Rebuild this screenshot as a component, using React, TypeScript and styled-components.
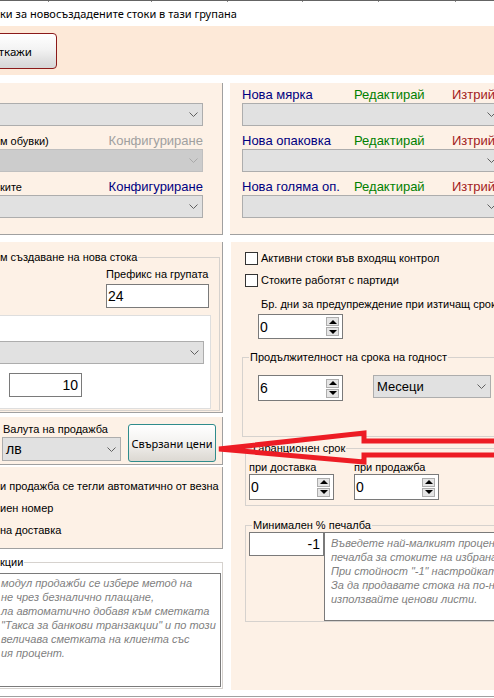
import React from 'react';
import styled, { createGlobalStyle, css } from 'styled-components';

const Global = createGlobalStyle`
  html, body { margin: 0; padding: 0; background: #fff; }
  body { overflow: hidden; }
  * { box-sizing: border-box; }
`;

const PEACH_BAR = '#fde9d8';
const PEACH = '#fdf1e6';
const SANS = `"Liberation Sans", Arial, sans-serif`;
const UI = `"Noto Sans", "Open Sans", sans-serif`;

const Page = styled.div`
  position: relative;
  width: 494px;
  height: 698px;
  overflow: hidden;
  background: #fff;
  font-family: ${SANS};
  font-size: 11px;
  color: #000;
`;

const HeaderRule = styled.div`
  display: grid;
  grid-template-columns: 49px 103px 76px 75px 76px 77px 1fr;
  border-top: 1px solid #646464;
  height: 2px;
`;
const HeaderTick = styled.div`
  border-right: 1px solid #8a8a8a;
`;

const TitleRow = styled.div`
  height: 24px;
  line-height: 24px;
  font-family: ${UI};
  font-size: 11px;
  white-space: nowrap;
`;

const ButtonBar = styled.div`
  height: 49px;
  background: ${PEACH_BAR};
  padding-top: 7px;
`;

const CancelButton = styled.div`
  width: 92px;
  height: 36px;
  margin-left: -35px;
  border: 1px solid #8b1a1a;
  border-radius: 4px;
  background: linear-gradient(#ffffff, #f3f3f3 45%, #e2e2e2 75%, #d6d6d6);
  font-family: ${UI};
  font-size: 11.5px;
  display: flex;
  align-items: center;
  justify-content: center;
`;

const Grid = styled.div<{ $top: number; $height: number; $gap: number }>`
  display: grid;
  grid-template-columns: 223px 1fr;
  column-gap: ${(p) => p.$gap}px;
  margin-top: ${(p) => p.$top}px;
  height: ${(p) => p.$height}px;
`;

const Panel = styled.div<{ $bordered?: boolean; $bleed?: boolean }>`
  background: ${PEACH};
  ${(p) =>
    p.$bordered &&
    css`
      border-right: 1px solid #a0a0a0;
      border-bottom: 1px solid #a0a0a0;
    `}
  ${(p) => p.$bleed && css`margin-right: -12px;`}
`;

const FieldStack = styled.div<{ $left: number; $width: number }>`
  display: flex;
  flex-direction: column;
  gap: 7px;
  padding-top: 4px;
  margin-left: ${(p) => p.$left}px;
  width: ${(p) => p.$width}px;
`;

const Field = styled.div`
  display: flex;
  flex-direction: column;
`;

const LinkRow = styled.div<{ $grid?: boolean }>`
  height: 16px;
  line-height: 16px;
  white-space: nowrap;
  display: ${(p) => (p.$grid ? 'grid' : 'flex')};
  align-items: baseline;
  ${(p) =>
    p.$grid
      ? css`grid-template-columns: 112px 98px auto;`
      : css`justify-content: space-between; padding-left: 4px;`}
`;

const Link = styled.span<{ $tone: 'navy' | 'green' | 'red' | 'gray' }>`
  font-size: 13px;
  color: ${(p) =>
    ({ navy: '#000080', green: '#008000', red: '#a31c1c', gray: '#a0a0a0' })[p.$tone]};
`;

const ComboBox = styled.div<{ $disabled?: boolean; $w?: number; $h?: number; $fs?: number }>`
  height: ${(p) => p.$h ?? 23}px;
  width: ${(p) => (p.$w ? `${p.$w}px` : 'auto')};
  flex: none;
  border: 1px solid ${(p) => (p.$disabled ? '#bfbfbf' : '#adadad')};
  background: ${(p) => (p.$disabled ? '#cccccc' : '#e1e1e1')};
  display: flex;
  align-items: center;
  justify-content: space-between;
  padding: 0 4px 0 3px;
  font-size: ${(p) => p.$fs ?? 14}px;
  color: #000;
  svg { flex: none; }
`;

const Chevron = ({ muted }: { muted?: boolean }) => (
  <svg width="9" height="5" viewBox="0 0 9 5">
    <path d="M0.5 0.5 L4.5 4.5 L8.5 0.5" fill="none" stroke={muted ? '#a8a8a8' : '#606060'} strokeWidth="1" />
  </svg>
);

const Combo = ({ text, ...rest }: { text?: string; $disabled?: boolean; $w?: number; $h?: number; $fs?: number }) => (
  <ComboBox {...rest}>
    <span>{text ?? ''}</span>
    <Chevron muted={rest.$disabled} />
  </ComboBox>
);

/* ---------- group boxes ---------- */
const Group = styled.fieldset<{ $left?: number; $width?: number; $top?: number; $right?: number; $pb?: number }>`
  margin: ${(p) => p.$top ?? 0}px ${(p) => p.$right ?? 0}px 0 ${(p) => p.$left ?? 0}px;
  padding: 0 0 ${(p) => p.$pb ?? 0}px 0;
  border: 1px solid #d6d2ce;
  min-width: 0;
  ${(p) => p.$width && css`width: ${p.$width}px;`}
`;
const GroupTitle = styled.legend`
  padding: 0 1px;
  margin-left: 6px;
  line-height: 14px;
  font-size: 11px;
  white-space: nowrap;
`;

const TextInput = styled.div<{ $w: number; $h: number; $align?: 'left' | 'right' }>`
  width: ${(p) => p.$w}px;
  height: ${(p) => p.$h}px;
  flex: none;
  border: 1px solid #7a7a7a;
  background: #fff;
  font-size: 14px;
  display: flex;
  align-items: center;
  justify-content: ${(p) => (p.$align === 'right' ? 'flex-end' : 'flex-start')};
  padding: 0 3px 0 1px;
`;

/* numeric up-down */
const NumericBox = styled.div<{ $h?: number }>`
  width: 85px;
  height: ${(p) => p.$h ?? 25}px;
  flex: none;
  border: 1px solid #7a7a7a;
  background: #fff;
  display: flex;
  align-items: center;
  justify-content: space-between;
  padding: 0 3px 0 1px;
  font-size: 14px;
`;
const SpinCol = styled.div`
  display: flex;
  flex-direction: column;
  gap: 1px;
`;
const SpinBtn = styled.div<{ $down?: boolean }>`
  width: 13px;
  height: 9px;
  border: 1px solid #adadad;
  background: #e5e5e5;
  display: flex;
  align-items: center;
  justify-content: center;
  &::after {
    content: '';
    width: 0;
    height: 0;
    border-left: 4px solid transparent;
    border-right: 4px solid transparent;
    ${(p) =>
      p.$down ? css`border-top: 4px solid #000;` : css`border-bottom: 4px solid #000;`}
  }
`;
const Numeric = ({ value, h }: { value: string; h?: number }) => (
  <NumericBox $h={h}>
    <span>{value}</span>
    <SpinCol>
      <SpinBtn />
      <SpinBtn $down />
    </SpinCol>
  </NumericBox>
);

/* ---------- left column, row 2 ---------- */
const LeftStack = styled.div`
  display: flex;
  flex-direction: column;
`;

const PanelA = styled(Panel)`
  height: 171px;
  padding-top: 8px;
`;

const PrefixBlock = styled.div`
  margin: 3px 0 0 113px;
  width: 103px;
  display: flex;
  flex-direction: column;
  gap: 3px;
`;
const Line = styled.div<{ $h?: number; $pl?: number; $mt?: number }>`
  height: ${(p) => p.$h ?? 14}px;
  line-height: ${(p) => p.$h ?? 14}px;
  white-space: nowrap;
  padding-left: ${(p) => p.$pl ?? 0}px;
  margin-top: ${(p) => p.$mt ?? 0}px;
`;

const WhiteBox = styled.div`
  margin-top: 7px;
  width: 218px;
  height: 94px;
  border: 1px solid #dedede;
  background: #fff;
  padding-top: 25px;
  display: flex;
  flex-direction: column;
  gap: 9px;
`;
const Indent = styled.div<{ $l: number }>`
  padding-left: ${(p) => p.$l}px;
`;

const PanelB = styled(Panel)`
  margin-top: 4px;
  height: 48px;
  padding-top: 5px;
  display: flex;
  align-items: flex-start;
`;
const CurrencyCol = styled.div`
  margin-left: 2px;
  display: flex;
  flex-direction: column;
  gap: 1px;
`;
const LinkedPricesButton = styled.div`
  margin: 2px 0 0 7px;
  width: 88px;
  height: 38px;
  border: 1px solid #2f8c8c;
  border-radius: 3px;
  background: linear-gradient(#ffffff, #f4f3f1 45%, #e4e1dc 80%, #dcd8d2);
  font-family: ${UI};
  font-size: 11px;
  white-space: nowrap;
  display: flex;
  align-items: center;
  justify-content: center;
`;

const PanelC = styled(Panel)`
  margin-top: 2px;
  height: 82px;
  padding-top: 8px;
`;

const Memo = styled.div<{ $h: number; $pl: number; $pt: number; $mr?: number }>`
  height: ${(p) => p.$h}px;
  border: 1px solid #7a7a7a;
  background: #fff;
  padding: ${(p) => p.$pt}px 0 0 ${(p) => p.$pl}px;
  margin-right: ${(p) => p.$mr ?? 0}px;
  overflow: hidden;
  font-style: italic;
  font-size: 11px;
  line-height: 14px;
  color: #7f7f7f;
  white-space: nowrap;
  flex: 1;
`;

/* ---------- right column, row 2 ---------- */
const RightPanel = styled(Panel)`
  padding: 5px 0 0 11px;
  display: flex;
  flex-direction: column;
`;
const CheckRow = styled.div`
  height: 22px;
  display: flex;
  align-items: center;
  gap: 3px;
  padding-left: 3px;
  white-space: nowrap;
`;
const CheckBox = styled.span`
  width: 13px;
  height: 13px;
  border: 1px solid #333;
  background: #fff;
  flex: none;
`;
const Row = styled.div<{ $pl?: number; $gap?: number; $mt?: number; $pb?: number }>`
  display: flex;
  align-items: flex-start;
  padding: 0 0 ${(p) => p.$pb ?? 0}px ${(p) => p.$pl ?? 0}px;
  gap: ${(p) => p.$gap ?? 0}px;
  margin-top: ${(p) => p.$mt ?? 0}px;
`;
const Col = styled.div`
  display: flex;
  flex-direction: column;
`;

const BottomRule = styled.div`
  margin-top: 6px;
  height: 1px;
  background: #a0a0a0;
`;

const ArrowLayer = styled.svg`
  position: absolute;
  left: 0;
  top: 0;
  pointer-events: none;
`;

export default function App() {
  return (
    <Page>
      <Global />
      <HeaderRule>
        {Array.from({ length: 6 }).map((_, i) => (
          <HeaderTick key={i} />
        ))}
        <div />
      </HeaderRule>
      <TitleRow>ки за новосъздадените стоки в тази групана</TitleRow>
      <ButtonBar>
        <CancelButton>Откажи</CancelButton>
      </ButtonBar>

      <Grid $top={8} $height={152} $gap={7}>
        <Panel $bordered>
          <FieldStack $left={-4} $width={207}>
            <Field>
              <LinkRow />
              <Combo />
            </Field>
            <Field>
              <LinkRow>
                <span>м обувки)</span>
                <Link $tone="gray">Конфигуриране</Link>
              </LinkRow>
              <Combo $disabled />
            </Field>
            <Field>
              <LinkRow>
                <span>ките</span>
                <Link $tone="navy">Конфигуриране</Link>
              </LinkRow>
              <Combo />
            </Field>
          </FieldStack>
        </Panel>
        <Panel $bordered $bleed>
          <FieldStack $left={12} $width={259}>
            {['Нова мярка', 'Нова опаковка', 'Нова голяма оп.'].map((t) => (
              <Field key={t}>
                <LinkRow $grid>
                  <Link $tone="navy">{t}</Link>
                  <Link $tone="green">Редактирай</Link>
                  <Link $tone="red">Изтрий</Link>
                </LinkRow>
                <Combo />
              </Field>
            ))}
          </FieldStack>
        </Panel>
      </Grid>

      <Grid $top={7} $height={448} $gap={8}>
        <LeftStack>
          <PanelA $bordered>
            <Group $left={-8} $width={228} $pb={1}>
              <GroupTitle>м създаване на нова стока</GroupTitle>
              <PrefixBlock>
                <Line>Префикс на групата</Line>
                <TextInput $w={103} $h={24}>24</TextInput>
              </PrefixBlock>
              <WhiteBox>
                <Combo $w={210} />
                <Indent $l={15}>
                  <TextInput $w={73} $h={24} $align="right">10</TextInput>
                </Indent>
              </WhiteBox>
            </Group>
          </PanelA>
          <PanelB $bordered>
            <CurrencyCol>
              <Line $pl={1}>Валута на продажба</Line>
              <Combo $w={119} $h={24} text="лв" $fs={14} />
            </CurrencyCol>
            <LinkedPricesButton>Свързани цени</LinkedPricesButton>
          </PanelB>
          <PanelC $bordered>
            <Line $h={22}>и продажба се тегли автоматично от везна</Line>
            <Line $h={22}>иен номер</Line>
            <Line $h={22}>на доставка</Line>
          </PanelC>
          <Group $left={-8} $width={231} $top={6} $pb={1}>
            <GroupTitle>кции</GroupTitle>
            <Row $mt={4}>
              <Memo $h={114} $pl={7} $pt={2} $mr={1}>
                <div>модул продажби се избере метод на</div>
                <div>не чрез безналично плащане,</div>
                <div>ла автоматично добавя към сметката</div>
                <div>"Такса за банкови транзакции" и по този</div>
                <div>величава сметката на клиента със</div>
                <div>ия процент.</div>
              </Memo>
            </Row>
          </Group>
        </LeftStack>

        <RightPanel $bleed>
          <CheckRow>
            <CheckBox />
            <span>Активни стоки във входящ контрол</span>
          </CheckRow>
          <CheckRow>
            <CheckBox />
            <span>Стоките работят с партиди</span>
          </CheckRow>
          <Line $pl={19} $mt={6}>Бр. дни за предупреждение при изтичащ срок</Line>
          <Row $mt={3} $pl={16}>
            <Numeric value="0" />
          </Row>

          <Group $top={11} $right={-40}>
            <GroupTitle>Продължителност на срока на годност</GroupTitle>
            <Row $mt={11} $pl={15} $gap={30} $pb={35}>
              <Numeric value="6" h={26} />
              <Combo $w={118} $h={23} text="Месеци" $fs={13} />
            </Row>
          </Group>

          <Group $top={4} $left={3} $right={-40}>
            <GroupTitle>Гаранционен срок</GroupTitle>
            <Row $pl={3} $gap={20} $pb={5}>
              <Col>
                <Line $mt={5}>при доставка</Line>
                <Numeric value="0" h={26} />
              </Col>
              <Col>
                <Line $mt={5}>при продажба</Line>
                <Numeric value="0" h={26} />
              </Col>
            </Row>
          </Group>

          <Group $top={12} $left={3} $right={-40}>
            <GroupTitle>Минимален % печалба</GroupTitle>
            <Row $pl={3}>
              <TextInput $w={75} $h={24} $align="right">-1</TextInput>
              <Memo $h={89} $pl={6} $pt={3}>
                <div>Въведете най-малкият процент на</div>
                <div>печалба за стоките на избраната група.</div>
                <div>При стойност "-1" настройката се взема</div>
                <div>За да продавате стока на по-ниска цена,</div>
                <div>използвайте ценови листи.</div>
              </Memo>
            </Row>
          </Group>
        </RightPanel>
      </Grid>
      <BottomRule />

      <ArrowLayer width={494} height={698} viewBox="0 0 494 698">
        <polyline
          points="505,441 364,441 364,433 219,449 364,462 364,455 505,455"
          fill="none"
          stroke="#ed1c24"
          strokeWidth={5}
          strokeLinejoin="miter"
          strokeMiterlimit={10}
        />
      </ArrowLayer>
    </Page>
  );
}
